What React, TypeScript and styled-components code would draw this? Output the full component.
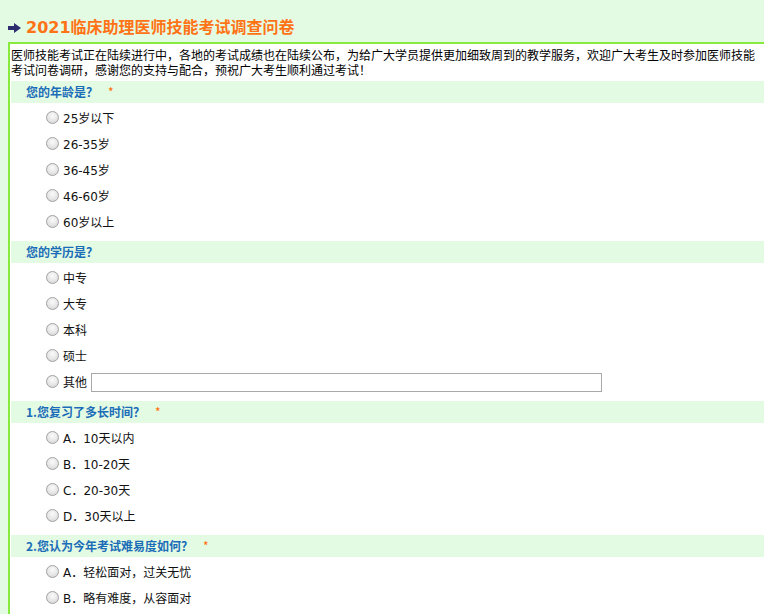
import React from "react";
import styled, { createGlobalStyle } from "styled-components";

const Global = createGlobalStyle`
  html, body { margin: 0; padding: 0; overflow: hidden; background: #e3fbe3; }
  * { box-sizing: border-box; }
`;

const Page = styled.div`
  padding-left: 8px;
  font-family: "DejaVu Sans", "Noto Sans CJK SC", sans-serif;
`;

const TitleRow = styled.div`
  height: 42px;
  padding-top: 14px;
  display: flex;
  align-items: center;
  gap: 5px;
  line-height: 22px;
`;

const Title = styled.h1`
  margin: 0;
  font-family: "DejaVu Sans", "Noto Sans CJK SC", sans-serif;
  font-size: 16px;
  font-weight: bold;
  color: #ff7316;
  line-height: 22px;
`;

const Panel = styled.div`
  width: 756px;
  background: #fff;
  border-top: 2px solid #88ea3c;
  border-left: 2px solid #88ea3c;
  padding: 3px 0 0 1px;
`;

const Intro = styled.p`
  margin: 0 0 4px 0;
  font-family: "Noto Sans CJK SC", sans-serif;
  font-size: 12px;
  line-height: 15px;
  color: #000;
`;

const IntroLine = styled.span<{ $full?: boolean }>`
  display: block;
  width: ${(p) => (p.$full ? "743px" : "auto")};
  white-space: nowrap;
  text-align: ${(p) => (p.$full ? "justify" : "left")};
  text-align-last: ${(p) => (p.$full ? "justify" : "left")};
  text-justify: inter-character;
`;

const Bar = styled.div`
  height: 22px;
  line-height: 22px;
  padding-left: 15px;
  background: #e3fbe3;
  font-family: "Noto Sans CJK SC", sans-serif;
  font-size: 12px;
  font-weight: bold;
  color: #1b6db8;
`;

const Star = styled.span`
  margin-left: 10px;
  color: #ff6a00;
  font-weight: normal;
`;

const Options = styled.div`
  padding: 2px 0 6px 0;
`;

const Row = styled.label`
  height: 26px;
  display: flex;
  align-items: center;
  padding-left: 35px;
  font-size: 12px;
  color: #111;
`;

const Radio = styled.input.attrs({ type: "radio" })`
  appearance: none;
  -webkit-appearance: none;
  margin: 0 4px 2px 0;
  width: 13px;
  height: 13px;
  border-radius: 50%;
  border: 1px solid #a2a2a2;
  background: radial-gradient(circle at 50% 35%, #fbfbfb 0%, #e6e6e6 55%, #cfcfcf 100%);
  flex: none;
`;

const OptText = styled.span`
  line-height: 14px;
  padding-top: 2px;
`;

const OtherInput = styled.input.attrs({ type: "text" })`
  margin-left: 4px;
  width: 511px;
  height: 19px;
  border: 1px solid #a9a9a9;
  padding: 0 2px;
  background: #fff;
  outline: none;
`;

type Q = { title: string; required: boolean; options: string[]; other?: boolean };

const questions: Q[] = [
  { title: "您的年龄是？", required: true, options: ["25岁以下", "26-35岁", "36-45岁", "46-60岁", "60岁以上"] },
  { title: "您的学历是？", required: false, options: ["中专", "大专", "本科", "硕士", "其他"], other: true },
  { title: "1.您复习了多长时间？", required: true, options: ["A．10天以内", "B．10-20天", "C．20-30天", "D．30天以上"] },
  { title: "2.您认为今年考试难易度如何？", required: true, options: ["A．轻松面对，过关无忧", "B．略有难度，从容面对"] },
];

const Arrow = () => (
  <svg width="13" height="10" viewBox="0 0 13 10">
    <rect x="0" y="3" width="7" height="4" fill="#2c2c6e" />
    <polygon points="6,0 13,5 6,10" fill="#2c2c6e" />
  </svg>
);

export default function App() {
  return (
    <Page>
      <Global />
      <TitleRow>
        <Arrow />
        <Title>2021临床助理医师技能考试调查问卷</Title>
      </TitleRow>
      <Panel>
        <Intro>
          <IntroLine $full>
            医师技能考试正在陆续进行中，各地的考试成绩也在陆续公布，为给广大学员提供更加细致周到的教学服务，欢迎广大考生及时参加医师技能
          </IntroLine>
          <IntroLine>考试问卷调研，感谢您的支持与配合，预祝广大考生顺利通过考试！</IntroLine>
        </Intro>
        {questions.map((q, qi) => (
          <section key={qi}>
            <Bar>
              {q.title}
              {q.required && <Star>*</Star>}
            </Bar>
            <Options>
              {q.options.map((o, oi) => (
                <Row key={oi}>
                  <Radio name={`q${qi}`} />
                  <OptText>{o}</OptText>
                  {q.other && oi === q.options.length - 1 && <OtherInput />}
                </Row>
              ))}
            </Options>
          </section>
        ))}
      </Panel>
    </Page>
  );
}
